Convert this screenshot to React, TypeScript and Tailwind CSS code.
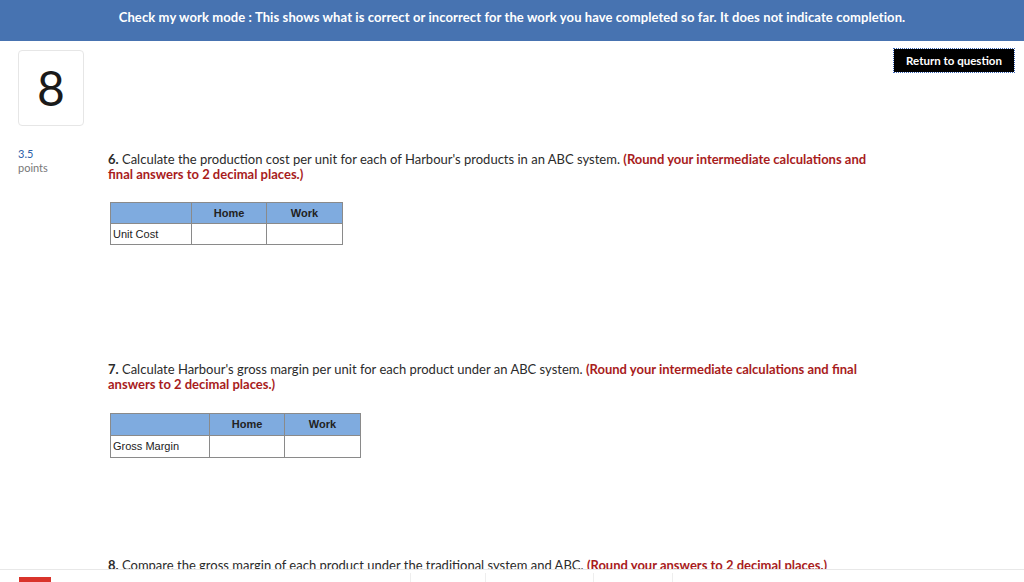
import React from "react";

const body = { fontFamily: "Lato, 'Open Sans', sans-serif" };
const arial = { fontFamily: "'Liberation Sans', Arial, sans-serif" };

function AnswerTable({
  label,
  firstCol,
  rowH,
}: {
  label: string;
  firstCol: string;
  rowH: string;
}) {
  return (
    <table className="border-collapse text-[11px] text-[#222]" style={arial}>
      <thead>
        <tr className="bg-[#7fabdf]">
          <th className={`${firstCol} ${rowH} border border-[#8a8a8a]`} />
          <th className={`w-[75px] ${rowH} border border-[#8a8a8a] font-bold`}>Home</th>
          <th className={`w-[76px] ${rowH} border border-[#8a8a8a] font-bold`}>Work</th>
        </tr>
      </thead>
      <tbody>
        <tr>
          <td className={`${rowH} border border-[#8a8a8a] pl-[2px] text-left`}>{label}</td>
          <td className="border border-[#8a8a8a]" />
          <td className="border border-[#8a8a8a]" />
        </tr>
      </tbody>
    </table>
  );
}

function Question({
  num,
  text,
  hint,
}: {
  num: string;
  text: string;
  hint: string;
}) {
  return (
    <p className="w-[770px] text-[13px] leading-[15px] text-[#2b2b2b]" style={body}>
      <span className="font-bold">{num}</span> {text}{" "}
      <span className="font-bold text-[#a81c1c]">{hint}</span>
    </p>
  );
}

export default function App() {
  return (
    <div className="flex h-[582px] w-[1024px] flex-col overflow-hidden bg-white">
      <header
        className="flex h-[41px] shrink-0 items-start justify-center bg-[#4773b1] pt-[8px] text-[13px] font-bold tracking-[0.1px] text-white"
        style={body}
      >
        Check my work mode : This shows what is correct or incorrect for the work you have completed so far. It does not indicate completion.
      </header>

      <main className="relative flex-1 overflow-hidden">
        <div className="flex">
          <div className="w-[90px] shrink-0 pl-[18px] pt-[9px]">
            <div
              className="flex h-[76px] w-[66px] items-center justify-center rounded-[4px] border border-[#e6e6e6] text-[48px] font-normal text-[#1a1a1a]"
              style={{ fontFamily: "Lato, sans-serif" }}
            >
              8
            </div>
            <div className="mt-[21px] text-[11px] leading-[14px]" style={body}>
              <div className="text-[#2e5fa8]">3.5</div>
              <div className="text-[#777]">points</div>
            </div>
          </div>

          <div className="flex-1 pl-[18px] pt-[111px]">
            <Question
              num="6."
              text="Calculate the production cost per unit for each of Harbour's products in an ABC system."
              hint="(Round your intermediate calculations and final answers to 2 decimal places.)"
            />
            <div className="ml-[2px] mt-[20px]">
              <AnswerTable label="Unit Cost" firstCol="w-[81px]" rowH="h-[21px]" />
            </div>

            <div className="mt-[117px]">
              <Question
                num="7."
                text="Calculate Harbour's gross margin per unit for each product under an ABC system."
                hint="(Round your intermediate calculations and final answers to 2 decimal places.)"
              />
            </div>
            <div className="ml-[2px] mt-[21px]">
              <AnswerTable label="Gross Margin" firstCol="w-[99px]" rowH="h-[22px]" />
            </div>

            <div className="mt-[100px]">
              <Question
                num="8."
                text="Compare the gross margin of each product under the traditional system and ABC."
                hint="(Round your answers to 2 decimal places.)"
              />
            </div>
          </div>

          <div className="absolute right-[10px] top-[8px] flex">
            <button
              type="button"
              className="block h-[23px] w-[120px] bg-black text-[11.5px] font-bold text-white outline-1 outline-dotted outline-offset-0 outline-[#3a64b5]"
              style={body}
            >
              Return to question
            </button>
          </div>
        </div>
      </main>

      <footer className="flex h-[13px] shrink-0 border-t border-[#e8e8e8] bg-white">
        <div className="ml-[19px] mt-[7px] h-[6px] w-[32px] bg-[#d9342b]" />
        <div className="ml-[359px] flex h-full">
          <div className="mt-[3px] h-full w-[75px] border-l border-[#eeeeee]" />
          <div className="mt-[3px] h-full w-[108px] border-l border-[#eeeeee]" />
          <div className="mt-[3px] h-full w-[79px] border-l border-[#eeeeee]" />
          <div className="mt-[3px] h-full w-px border-l border-[#eeeeee]" />
        </div>
      </footer>
    </div>
  );
}
